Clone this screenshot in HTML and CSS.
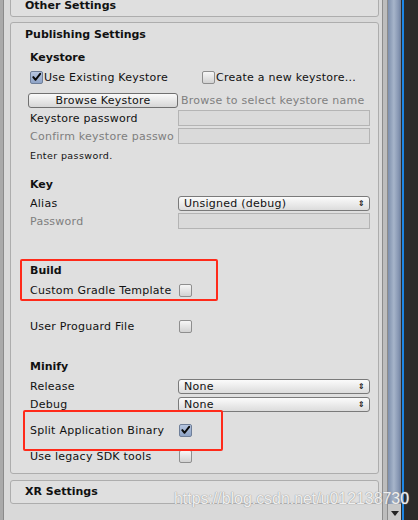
FILE: index.html
```html
<!DOCTYPE html>
<html>
<head>
<meta charset="utf-8">
<link rel="stylesheet" href="styles.css">
</head>
<body>
<div class="app">
  <div class="edge"></div>
  <div class="content">
    <div class="panel panel-cut">
      <div class="panel-title">Other Settings</div>
    </div>
    <div class="panel panel-pub">
      <div class="row title-row"><span class="panel-title">Publishing Settings</span></div>
      <div class="row mt5"><span class="sub">Keystore</span></div>
      <div class="row mt2">
        <div class="opt opt-a"><span class="cb checked"><svg viewBox="0 0 12 12"><path d="M2.5 6.2 L5 9 L10 2.6" /></svg></span>Use Existing Keystore</div>
        <div class="opt"><span class="cb"></span>Create a new keystore...</div>
      </div>
      <div class="row mt5">
        <div class="btn">Browse Keystore</div>
        <div class="hint">Browse to select keystore name</div>
      </div>
      <div class="row"><span class="label">Keystore password</span><span class="field"></span></div>
      <div class="row"><span class="label dim">Confirm keystore passwo</span><span class="field"></span></div>
      <div class="row mt1"><span class="small">Enter password.</span></div>
      <div class="row mt11"><span class="sub">Key</span></div>
      <div class="row mt1"><span class="label">Alias</span><span class="popup"><span>Unsigned (debug)</span><span class="arrows">&#8661;</span></span></div>
      <div class="row"><span class="label dim">Password</span><span class="field"></span></div>
      <div class="row mt31"><span class="sub">Build</span></div>
      <div class="row mt2"><span class="label">Custom Gradle Template</span><span class="cb cb-field"></span></div>
      <div class="row mt18"><span class="label">User Proguard File</span><span class="cb cb-field"></span></div>
      <div class="row mt22"><span class="sub">Minify</span></div>
      <div class="row mt2"><span class="label">Release</span><span class="popup"><span>None</span><span class="arrows">&#8661;</span></span></div>
      <div class="row"><span class="label">Debug</span><span class="popup"><span>None</span><span class="arrows">&#8661;</span></span></div>
      <div class="row mt8"><span class="label">Split Application Binary</span><span class="cb cb-field checked"><svg viewBox="0 0 12 12"><path d="M2.5 6.2 L5 9 L10 2.6" /></svg></span></div>
      <div class="row mt8"><span class="label">Use legacy SDK tools</span><span class="cb cb-field"></span></div>
      <div class="mark mark-build"></div>
      <div class="mark mark-split"></div>
    </div>
    <div class="panel panel-xr">
      <div class="panel-title">XR Settings</div>
    </div>
  </div>
  <div class="gutter"></div>
  <div class="scrollbar">
    <div class="thumb"></div>
    <div class="down"></div>
  </div>
  <div class="blue"></div>
  <div class="dark"></div>
  <div class="watermark">https://blog.csdn.net/u012138730</div>
</div>
</body>
</html>
```
FILE: styles.css
```css
* { box-sizing: border-box; }
html, body { margin: 0; padding: 0; }
body {
  width: 418px;
  height: 520px;
  overflow: hidden;
  font-family: "DejaVu Sans", Verdana, sans-serif;
  font-size: 11px;
  letter-spacing: 0.25px;
  color: #111;
  background: #d6d6d6;
}
.app {
  position: relative;
  display: flex;
  height: 520px;
}
.edge {
  flex: 0 0 4px;
  width: 4px;
  background: #a9a9a9;
  border-right: 1px solid #8a8a8a;
}
.content {
  flex: 0 0 378px;
  width: 378px;
  padding: 0 3px 0 6px;
  background: #d9d9d9;
  display: flex;
  flex-direction: column;
}
.panel {
  border: 1px solid #adadad;
  border-radius: 3px;
  background: #dfdfdf;
}
.panel-cut {
  margin-top: -7px;
  height: 24px;
  padding: 3px 0 0 14px;
  line-height: 18px;
}
.panel-xr {
  margin-top: 6px;
  height: 24px;
  padding: 2px 0 0 14px;
  line-height: 18px;
}
.panel-title, .sub {
  font-weight: bold;
  letter-spacing: 0;
}
.panel-pub {
  position: relative;
  margin-top: 5px;
  height: 452px;
  padding: 2px 7px 0 19px;
}
.row {
  display: flex;
  align-items: center;
  height: 18px;
  white-space: nowrap;
}
.title-row { margin-left: -5px; }
.mt1 { margin-top: 1px; }
.mt2 { margin-top: 2px; }
.mt5 { margin-top: 5px; }
.mt8 { margin-top: 8px; }
.mt11 { margin-top: 11px; }
.mt18 { margin-top: 18px; }
.mt22 { margin-top: 22px; }
.mt31 { margin-top: 31px; }
.label {
  width: 148px;
  flex: 0 0 148px;
  overflow: hidden;
}
.dim { color: #7e7e7e; }
.small { font-size: 9.5px; letter-spacing: 0.4px; }
.opt {
  display: flex;
  align-items: center;
}
.opt-a { width: 172px; }
.cb {
  width: 13px;
  height: 13px;
  border: 1px solid #8e8e8e;
  border-radius: 2px;
  background: linear-gradient(#f6f6f6, #d2d2d2);
  margin-right: 1px;
  display: inline-flex;
  align-items: center;
  justify-content: center;
  flex: 0 0 13px;
}
.cb-field { margin-left: 1px; }
.cb.checked {
  background: linear-gradient(#b7c6e0, #8ea3c6);
  border-color: #6f7f99;
}
.cb svg { width: 12px; height: 12px; }
.cb svg path {
  fill: none;
  stroke: #0a0a0a;
  stroke-width: 2.2;
  stroke-linecap: round;
  stroke-linejoin: round;
}
.btn {
  width: 150px;
  height: 15px;
  margin-left: -2px;
  border: 1px solid #707070;
  border-radius: 3px;
  background: linear-gradient(#fafafa, #d6d6d6);
  text-align: center;
  line-height: 13px;
}
.hint {
  margin-left: 3px;
  color: #808080;
}
.field {
  width: 192px;
  height: 16px;
  border: 1px solid #b4b4b4;
  background: #dadada;
}
.popup {
  width: 192px;
  height: 15px;
  border: 1px solid #7a7a7a;
  border-radius: 3px;
  background: linear-gradient(#fbfbfb, #dcdcdc);
  display: flex;
  align-items: center;
  justify-content: space-between;
  padding: 0 4px 0 5px;
  line-height: 13px;
}
.arrows {
  font-size: 8px;
  font-weight: bold;
}
.mark {
  position: absolute;
  border: 2px solid #ff2a1a;
  border-radius: 2px;
}
.mark-build { left: 9px; top: 236px; width: 198px; height: 42px; }
.mark-split { left: 12px; top: 387px; width: 200px; height: 41px; }
.gutter {
  flex: 0 0 6px;
  width: 6px;
  border-left: 1px solid #8c8c8c;
  border-right: 1px solid #8c8c8c;
  background: #bdbdbd;
}
.scrollbar {
  flex: 0 0 13px;
  width: 13px;
  display: flex;
  flex-direction: column;
  background: #c8c8c8;
}
.thumb {
  flex: 1;
  background: linear-gradient(90deg, #7d8fac, #a7b5ca 45%, #8797b3 80%, #6f819f);
  margin-bottom: 2px;
}
.down {
  height: 14px;
  display: flex;
  justify-content: center;
  align-items: center;
}
.down::after {
  content: "";
  border-left: 4px solid transparent;
  border-right: 4px solid transparent;
  border-top: 5px solid #222;
}
.blue {
  flex: 0 0 3px;
  background: #1c86e6;
  border-left: 1px solid #2b2b2b;
  width: 3px;
}
.dark {
  flex: 1;
  background: #2b2b2b;
}
.watermark {
  position: absolute;
  left: 174px;
  top: 490px;
  font-family: "Liberation Sans", Arial, sans-serif;
  font-size: 15.9px;
  letter-spacing: 0;
  color: rgba(255, 255, 255, 0.85);
  text-shadow: 0 0 1px #9a9a9a, 0 0 1px #9a9a9a;
  white-space: nowrap;
}
```
